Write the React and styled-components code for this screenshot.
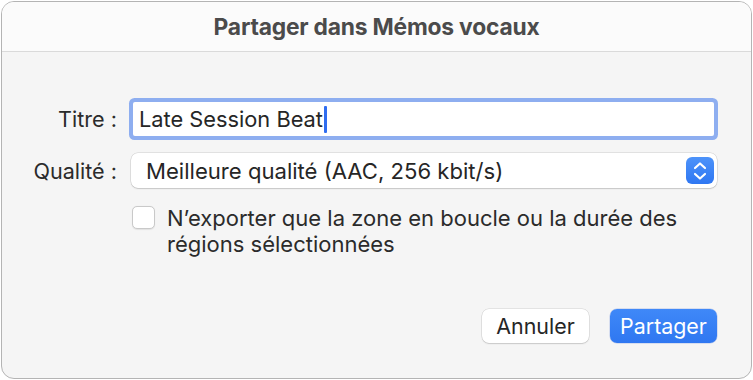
import React from 'react';
import styled, { createGlobalStyle } from 'styled-components';

const GlobalStyle = createGlobalStyle`
  html, body {
    margin: 0;
    padding: 0;
    background: #ffffff;
  }
  body {
    font-family: Inter, "Liberation Sans", "Noto Sans", sans-serif;
    -webkit-font-smoothing: antialiased;
  }
`;

const Window = styled.div`
  box-sizing: border-box;
  margin: 1px 0 0 1px;
  width: 751px;
  height: 378px;
  border: 1px solid #b4b4b4;
  border-radius: 13px;
  overflow: hidden;
  display: flex;
  flex-direction: column;
  background: #f5f5f5;
`;

const TitleBar = styled.div`
  height: 49px;
  flex: none;
  display: flex;
  align-items: center;
  justify-content: center;
  background: #fbfbfb;
  border-bottom: 1px solid #dadada;
`;

const Title = styled.h1`
  margin: 0;
  font-size: 22.8px;
  font-weight: 700;
  color: #4b4b4b;
  letter-spacing: -0.2px;
`;

const Body = styled.div`
  flex: 1;
  display: flex;
  flex-direction: column;
  padding: 50px 34px 35px 0;
`;

const Form = styled.div`
  display: grid;
  grid-template-columns: 115px 1fr;
  column-gap: 14px;
  row-gap: 17px;
  align-items: center;
`;

const Label = styled.label`
  justify-self: end;
  font-size: 21.6px;
  color: #2b2b2b;
`;

const TextField = styled.div`
  position: relative;
  height: 34px;
  margin-left: 2px;
  margin-right: 3px;
  display: flex;
  align-items: center;
  padding-left: 6px;
  background: #ffffff;
  border-radius: 2px;
  box-shadow: 0 0 0 4px #8eaef0;
  font-size: 21.8px;
  color: #262626;
`;

const Caret = styled.span`
  display: inline-block;
  width: 3px;
  height: 27px;
  margin-left: 1px;
  border-radius: 1px;
  background: #2f6df0;
`;

const Select = styled.div`
  height: 35px;
  display: flex;
  align-items: center;
  justify-content: space-between;
  padding: 0 3px 0 15px;
  background: #ffffff;
  border-radius: 7px;
  box-shadow: 0 0 0 0.5px rgba(0, 0, 0, 0.16), 0 1px 1.5px rgba(0, 0, 0, 0.12);
  font-size: 22.1px;
  color: #262626;
`;

const Stepper = styled.div`
  width: 28px;
  height: 27px;
  border-radius: 6px;
  background: linear-gradient(#4d93fa, #2f77f2);
  display: flex;
  align-items: center;
  justify-content: center;
`;

const CheckRow = styled.div`
  grid-column: 2;
  display: flex;
  align-items: flex-start;
  gap: 12px;
  margin-left: 1px;
`;

const Box = styled.span`
  flex: none;
  box-sizing: border-box;
  width: 23px;
  height: 23px;
  margin-top: 1px;
  border-radius: 5px;
  background: #ffffff;
  border: 1px solid #c9c9c9;
  box-shadow: 0 0.5px 1px rgba(0, 0, 0, 0.08);
`;

const CheckText = styled.span`
  font-size: 22px;
  line-height: 26px;
  color: #2b2b2b;
`;

const Footer = styled.div`
  margin-top: auto;
  display: flex;
  justify-content: flex-end;
  gap: 21px;
`;

const Button = styled.button`
  width: 107px;
  height: 34px;
  border: none;
  border-radius: 7px;
  font-family: inherit;
  font-size: 21.4px;
  padding: 0;
  color: ${p => (p.$primary ? '#ffffff' : '#262626')};
  background: ${p => (p.$primary ? 'linear-gradient(#3f88f8, #2f77f1)' : '#ffffff')};
  box-shadow: ${p =>
    p.$primary
      ? '0 0 0 0.5px rgba(0, 60, 200, 0.25)'
      : '0 0 0 0.5px rgba(0, 0, 0, 0.14), 0 1px 1.5px rgba(0, 0, 0, 0.12)'};
`;

function Chevrons() {
  return (
    <svg width="16" height="22" viewBox="0 0 16 22">
      <path d="M3 8 L8 3.5 L13 8" fill="none" stroke="#fff" strokeWidth="2.2" strokeLinecap="round" strokeLinejoin="round" />
      <path d="M3 14 L8 18.5 L13 14" fill="none" stroke="#fff" strokeWidth="2.2" strokeLinecap="round" strokeLinejoin="round" />
    </svg>
  );
}

export default function App() {
  return (
    <>
      <GlobalStyle />
      <Window>
        <TitleBar>
          <Title>Partager dans Mémos vocaux</Title>
        </TitleBar>
        <Body>
          <Form>
            <Label>Titre :</Label>
            <TextField>
              Late Session Beat<Caret />
            </TextField>
            <Label>Qualité :</Label>
            <Select>
              <span>Meilleure qualité (AAC, 256 kbit/s)</span>
              <Stepper>
                <Chevrons />
              </Stepper>
            </Select>
            <CheckRow>
              <Box />
              <CheckText>
                N’exporter que la zone en boucle ou la durée des
                <br />
                régions sélectionnées
              </CheckText>
            </CheckRow>
          </Form>
          <Footer>
            <Button>Annuler</Button>
            <Button $primary>Partager</Button>
          </Footer>
        </Body>
      </Window>
    </>
  );
}
